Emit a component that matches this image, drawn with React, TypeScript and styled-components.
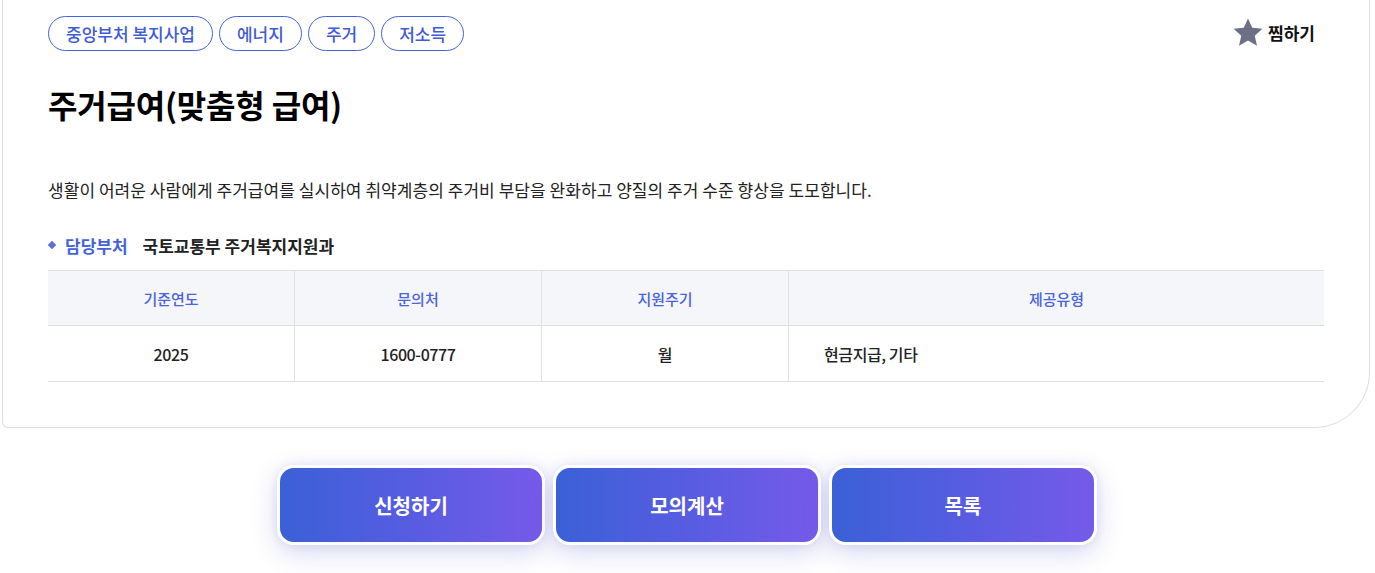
import React from "react";
import styled, { createGlobalStyle } from "styled-components";

const Global = createGlobalStyle`
  html, body { margin: 0; padding: 0; background: #fff; }
  body { font-family: "Noto Sans CJK KR", "Noto Sans", sans-serif; color: #111; }
  * { box-sizing: border-box; }
`;

const Page = styled.div`
  width: 1372px;
  padding: 0 0 40px 2px;
`;

const Card = styled.section`
  width: 1368px;
  border: 1px solid #dedede;
  border-top: none;
  border-radius: 0 0 56px 6px;
  padding: 16px 45px 45px 45px;
`;

const TopRow = styled.div`
  display: flex;
  justify-content: space-between;
  align-items: flex-start;
`;

const Tags = styled.div`
  display: flex;
  gap: 6px;
`;

const Tag = styled.span`
  display: inline-flex;
  align-items: center;
  height: 35px;
  padding: 0 17px;
  border: 1px solid #4463d8;
  border-radius: 18px;
  color: #3f5bd5;
  font-size: 17px;
  font-weight: 500;
`;

const Like = styled.button`
  display: flex;
  align-items: center;
  gap: 5px;
  margin-top: 2px;
  margin-right: 9px;
  border: none;
  background: none;
  padding: 0;
  font-family: inherit;
  font-size: 17px;
  font-weight: 700;
  color: #111;
  cursor: pointer;
`;

const Title = styled.h1`
  margin: 31px 0 0 0;
  font-size: 32px;
  font-weight: 700;
  letter-spacing: -0.2px;
  line-height: 44px;
  color: #000;
`;

const Desc = styled.p`
  margin: 52px 0 0 0;
  font-size: 17px;
  line-height: 24px;
  letter-spacing: 0.05px;
  color: #222;
`;

const DeptRow = styled.div`
  display: flex;
  align-items: center;
  margin-top: 31px;
  height: 24px;
  font-size: 17px;
  font-weight: 700;
`;

const Bullet = styled.span`
  width: 6px;
  height: 6px;
  background: #5a70e0;
  transform: rotate(45deg);
  margin: 0 10px 0 1px;
`;

const DeptLabel = styled.span`
  color: #4563d9;
  margin-right: 15px;
`;

const DeptValue = styled.span`
  color: #222;
`;

const Table = styled.div`
  margin-top: 13px;
  display: grid;
  grid-template-columns: 247px 247px 247px 1fr;
  border-top: 1px solid #e1e1e1;
`;

const Head = styled.div<{ $last?: boolean }>`
  height: 55px;
  display: flex;
  align-items: center;
  justify-content: center;
  background: #f5f6fa;
  border-bottom: 1px solid #dddddd;
  border-right: ${(p) => (p.$last ? "none" : "1px solid #e1e1e1")};
  color: #4a63dc;
  font-size: 15px;
  font-weight: 500;
`;

const Cell = styled.div<{ $left?: boolean; $last?: boolean }>`
  height: 56px;
  display: flex;
  align-items: center;
  justify-content: ${(p) => (p.$left ? "flex-start" : "center")};
  padding-left: ${(p) => (p.$left ? "35px" : "0")};
  border-bottom: 1px solid #dddddd;
  border-right: ${(p) => (p.$last ? "none" : "1px solid #e1e1e1")};
  color: #222;
  font-size: 16px;
  font-weight: 500;
  letter-spacing: -0.4px;
`;

const Actions = styled.div`
  display: flex;
  justify-content: center;
  gap: 8px;
  margin-top: 37px;
`;

const ActionButton = styled.button`
  width: 268px;
  height: 80px;
  border: 3px solid #fff;
  border-radius: 17px;
  background: linear-gradient(90deg, #3b60d6 0%, #5a5ce2 55%, #765ae9 100%);
  box-shadow: 0 8px 26px rgba(90, 90, 200, 0.24), 0 0 10px rgba(90, 90, 200, 0.12);
  color: #fff;
  font-family: inherit;
  font-size: 20px;
  font-weight: 700;
  cursor: pointer;
`;

const Star = () => (
  <svg width="30" height="29" viewBox="0 0 24 23">
    <path
      d="M12 0.3l3.4 7.4 8.1 0.8-6.1 5.5 1.8 8L12 17.9l-7.2 4.1 1.8-8L0.5 8.5l8.1-0.8z"
      fill="#6c6f86"
    />
  </svg>
);

export default function App() {
  const tags = ["중앙부처 복지사업", "에너지", "주거", "저소득"];
  return (
    <Page>
      <Global />
      <Card>
        <TopRow>
          <Tags>
            {tags.map((t) => (
              <Tag key={t}>{t}</Tag>
            ))}
          </Tags>
          <Like>
            <Star />
            찜하기
          </Like>
        </TopRow>
        <Title>주거급여(맞춤형 급여)</Title>
        <Desc>
          생활이 어려운 사람에게 주거급여를 실시하여 취약계층의 주거비 부담을 완화하고 양질의 주거 수준 향상을 도모합니다.
        </Desc>
        <DeptRow>
          <Bullet />
          <DeptLabel>담당부처</DeptLabel>
          <DeptValue>국토교통부 주거복지지원과</DeptValue>
        </DeptRow>
        <Table>
          <Head>기준연도</Head>
          <Head>문의처</Head>
          <Head>지원주기</Head>
          <Head $last>제공유형</Head>
          <Cell>2025</Cell>
          <Cell>1600-0777</Cell>
          <Cell>월</Cell>
          <Cell $left $last>현금지급, 기타</Cell>
        </Table>
      </Card>
      <Actions>
        <ActionButton>신청하기</ActionButton>
        <ActionButton>모의계산</ActionButton>
        <ActionButton>목록</ActionButton>
      </Actions>
    </Page>
  );
}
